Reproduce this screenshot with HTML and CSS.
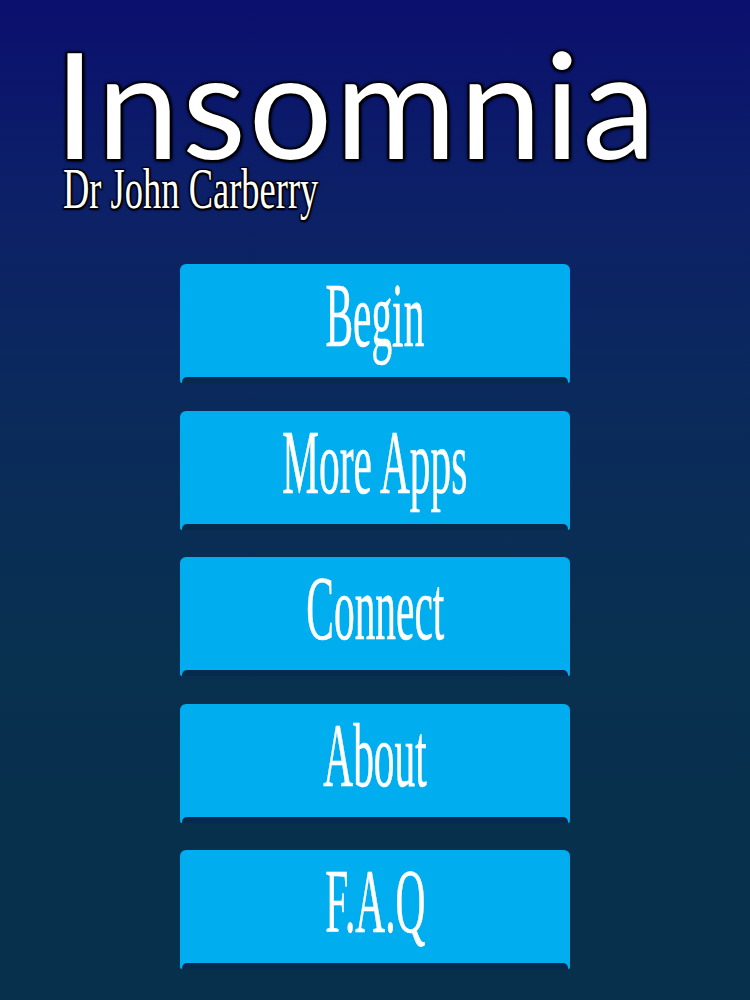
FILE: index.html
```html
<!DOCTYPE html>
<html>
<head>
<meta charset="utf-8">
<link rel="stylesheet" href="styles.css">
</head>
<body>
<div class="screen">
  <header class="head">
    <h1 class="title">Insomnia</h1>
    <div class="author"><span class="squeeze">Dr John Carberry</span></div>
  </header>
  <nav class="menu">
    <div class="btn"><span class="label">Begin</span></div>
    <div class="btn"><span class="label">More Apps</span></div>
    <div class="btn"><span class="label">Connect</span></div>
    <div class="btn"><span class="label">About</span></div>
    <div class="btn"><span class="label">F.A.Q</span></div>
  </nav>
</div>
</body>
</html>
```

FILE: styles.css
```css
html, body {
  margin: 0;
  padding: 0;
}
body {
  width: 750px;
  height: 1000px;
  overflow: hidden;
}
.screen {
  width: 750px;
  height: 1000px;
  background: linear-gradient(180deg, #0b0f6e 0%, #0c1f68 18%, #0b2a5c 40%, #08304f 65%, #06304b 100%);
  display: flex;
  flex-direction: column;
}
.head {
  display: flex;
  flex-direction: column;
  padding-left: 54px;
  padding-top: 42px;
  height: 242px;
  box-sizing: border-box;
}
.title {
  margin: 0;
  font-family: "Lato", "DejaVu Sans", sans-serif;
  font-weight: 400;
  font-size: 148px;
  line-height: 120px;
  height: 120px;
  color: #fff;
  letter-spacing: 2.5px;
  text-shadow: 0 0 1px #000, 0 0 2px #000, 0 0 3px #000, 0 0 4px #000, 2px 2px 3px #000, -2px -1px 2px #000, 2px -1px 2px #000, -1px 2px 2px #000;
}
.author {
  padding-top: 4px;
  padding-left: 9px;
  height: 46px;
}
.squeeze {
  display: inline-block;
  font-family: "Liberation Serif", serif;
  font-weight: 400;
  font-size: 57px;
  line-height: 46px;
  color: #fff;
  transform: scaleX(0.64);
  transform-origin: left center;
  white-space: nowrap;
  text-shadow: 0 0 1px #000, 0 0 2px #000, 0 0 3px #000, 2px 2px 2px #000, -2px -1px 1px #000, 2px -1px 1px #000, -1px 2px 1px #000;
}
.menu {
  display: flex;
  flex-direction: column;
  align-items: center;
  gap: 27.5px;
  padding-top: 22px;
}
.btn {
  position: relative;
  width: 390px;
  height: 119px;
  background: #00adef;
  border-radius: 6px 6px 2px 2px;
  display: flex;
  justify-content: center;
  align-items: flex-start;
  box-sizing: border-box;
  padding-top: 1px;
}
.btn::after {
  content: "";
  position: absolute;
  left: 2px;
  right: 2px;
  bottom: 0;
  height: 6px;
  background: #062a4d;
  border-radius: 5px 5px 0 0;
}
.label {
  display: inline-block;
  font-family: "Liberation Serif", serif;
  font-weight: 400;
  font-size: 92px;
  line-height: 100px;
  color: #fff;
  white-space: nowrap;
  transform: scaleX(0.45);
  -webkit-text-stroke: 0.6px #fff;
}
```
